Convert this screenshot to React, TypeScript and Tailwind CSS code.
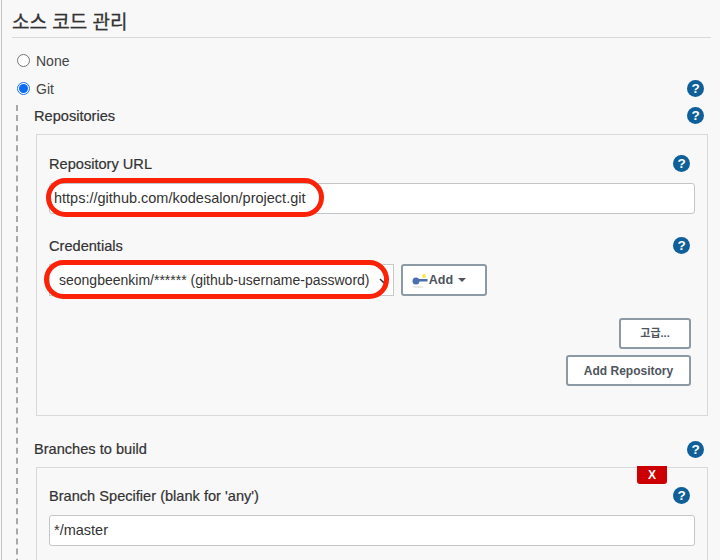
import React from "react";

function Help() {
  return (
    <svg width="17" height="17" viewBox="0 0 17 17" className="shrink-0">
      <circle cx="8.5" cy="8.5" r="8.5" fill="#0f5f99" />
      <text x="8.5" y="13.2" textAnchor="middle" fontSize="13.5" fontWeight="700" fill="#fff" fontFamily="Liberation Sans, sans-serif">?</text>
    </svg>
  );
}

function RowHelp() {
  return (
    <span className="-mt-[2px]">
      <Help />
    </span>
  );
}

function Radio({ checked }: { checked?: boolean }) {
  return checked ? (
    <span className="w-[13px] h-[13px] rounded-full border border-[#1a73f0] bg-white flex items-center justify-center shrink-0">
      <span className="w-[9px] h-[9px] rounded-full bg-[#0a6cf5]" />
    </span>
  ) : (
    <span className="w-[13px] h-[13px] rounded-full border border-[#767676] bg-white shrink-0" />
  );
}

function Btn({ children, className }: { children: React.ReactNode; className: string }) {
  return (
    <div className={"flex items-center justify-center bg-white rounded-[3px] border-2 border-[#8c9aa5] font-bold text-[#4d545d] " + className}>
      {children}
    </div>
  );
}

function TextField({ value }: { value: string }) {
  return (
    <div className="relative h-[31px] flex items-center bg-white border border-[#c3c6c9] rounded-[3px] pl-[4px] text-[14.5px] text-[#333]">
      {value}
    </div>
  );
}

export default function App() {
  return (
    <div
      className="w-[720px] h-[560px] overflow-hidden bg-[#f8f8f8] text-[#333] pl-[1px]"
      style={{ fontFamily: '"Liberation Sans", "Noto Sans CJK KR", sans-serif' }}
    >
      <div className="h-full border-l border-[#c4c4c4] pl-[10px] pr-[9px]">
        <div className="h-[38px] pt-[11px] border-b border-[#d9d9d9] text-[19px] leading-[24px] text-[#333] [-webkit-text-stroke:0.3px]">소스 코드 관리</div>

        <div className="flex items-center gap-[6px] pl-[5px] mt-[14px] h-[16px] text-[14px] text-[#444]">
          <Radio />
          <span className="pt-[2px]">None</span>
        </div>
        <div className="flex items-center gap-[6px] pl-[5px] mt-[12px] h-[16px] text-[14px] text-[#444]">
          <Radio checked />
          <span className="flex-1 pt-[2px]">Git</span>
          <span className="mr-[7px]"><Help /></span>
        </div>

        <div className="mt-[9px] ml-[4px] mr-[4px] border-l-2 border-dashed border-[#a8a8a8] pl-[16px] h-[500px]">
          <div className="flex items-center justify-between h-[20px] pt-[2px] mr-[3px] text-[14.6px] text-[#333] [-webkit-text-stroke:0.2px]">
            <span className="pt-[2px]">Repositories</span>
            <RowHelp />
          </div>

          <div className="relative mt-[9px] ml-[2px] mr-[-1px] h-[282px] border border-[#d9d9d9] px-[12px]">
            <div className="flex items-center justify-between h-[18px] mt-[20px] pr-[5px] text-[14.6px] [-webkit-text-stroke:0.2px]">
              <span className="pt-[2px]">Repository URL</span>
              <RowHelp />
            </div>
            <div className="mt-[10px]"><TextField value="https://github.com/kodesalon/project.git" /></div>

            <div className="flex items-center justify-between h-[18px] mt-[23px] pr-[5px] text-[14.6px] [-webkit-text-stroke:0.2px]">
              <span className="pt-[2px]">Credentials</span>
              <RowHelp />
            </div>
            <div className="flex items-center gap-[7px] mt-[9px]">
              <div className="relative w-[345px] h-[32px] bg-white border border-[#c9c9c9] pl-[9px] flex items-center text-[14px] text-[#333] whitespace-nowrap">
                seongbeenkim/****** (github-username-password)
                <svg width="9" height="6" viewBox="0 0 9 6" className="absolute right-[5px] top-[13px]">
                  <path d="M1 1l3.5 3.5L8 1" fill="none" stroke="#333" strokeWidth="1.5" />
                </svg>
              </div>
              <Btn className="w-[86px] h-[32px] text-[12.5px] gap-[1px] pr-[10px]">
                <svg width="16" height="16" viewBox="0 0 16 16">
                  <ellipse cx="6" cy="15" rx="6" ry="0.8" fill="#ddd" />
                  <circle cx="12" cy="4" r="2" fill="#f5e94a" />
                  <circle cx="4" cy="9" r="3.5" fill="#4a6fae" />
                  <path d="M6 7h9.5v2.5H6z" fill="#4a6fae" />
                </svg>
                <span>Add</span>
                <svg width="8" height="4" viewBox="0 0 8 4" className="ml-[4px]"><path d="M0 0h8L4 4z" fill="#4d545d" /></svg>
              </Btn>
            </div>

            <div className="flex justify-end mt-[22px] pr-[4px]">
              <Btn className="w-[72px] h-[31px] text-[11px]">고급...</Btn>
            </div>
            <div className="flex justify-end mt-[6px] pr-[4px]">
              <Btn className="w-[125px] h-[31px] text-[12px]">Add Repository</Btn>
            </div>

            <div className="absolute left-[9px] top-[43px] w-[278px] h-[39px] rounded-[20px] border-[5px] border-[#fb2208]" />
            <div className="absolute left-[7px] top-[125px] w-[345px] h-[39px] rounded-[20px] border-[5px] border-[#fb2208]" />
          </div>

          <div className="flex items-center justify-between h-[18px] mt-[24px] mr-[3px] text-[14.6px] [-webkit-text-stroke:0.2px]">
            <span className="pt-[2px]">Branches to build</span>
            <Help />
          </div>

          <div className="relative mt-[9px] ml-[2px] mr-[-1px] h-[120px] border border-[#d9d9d9] px-[12px]">
            <div className="absolute right-[40px] top-[-2px] w-[30px] h-[18px] bg-[#cc0003] rounded-b-[3px] flex items-center justify-center text-white text-[12px] font-bold">X</div>
            <div className="flex items-center justify-between h-[18px] mt-[19px] pr-[5px] text-[14.6px] [-webkit-text-stroke:0.2px]">
              <span className="pt-[2px]">Branch Specifier (blank for 'any')</span>
              <RowHelp />
            </div>
            <div className="mt-[10px]"><TextField value="*/master" /></div>
          </div>
        </div>
      </div>
    </div>
  );
}
